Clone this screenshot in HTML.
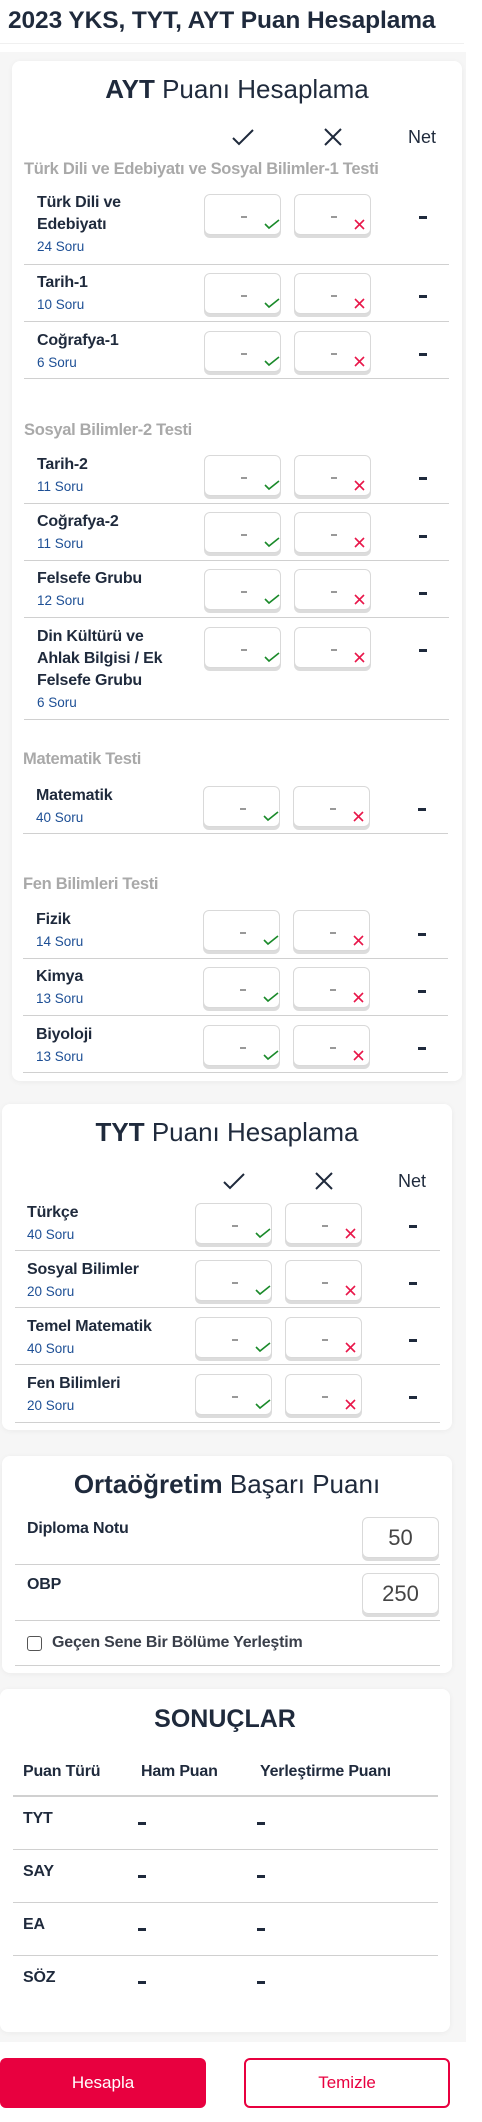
<!DOCTYPE html>
<html><head><meta charset="utf-8"><style>
*{margin:0;padding:0;box-sizing:border-box}
body{width:482px;height:2122px;position:relative;background:#fff;font-family:"Liberation Sans",Arial,sans-serif;color:#1f2a3c;overflow:hidden}
.a{position:absolute}
.bg{position:absolute;left:0;top:52px;width:466px;height:1990px;background:#f6f6f6}
.card{position:absolute;background:#fff;border-radius:8px;box-shadow:0 1px 6px rgba(0,0,0,.05)}
.h1{position:absolute;left:0;width:482px;top:7px;font-size:24.5px;font-weight:bold;text-align:left;padding-left:8px;color:#1f2a3c;letter-spacing:-.1px}
.tt{position:absolute;text-align:center;font-size:26px;color:#1f2a3c;font-weight:300}
.tt b{font-weight:bold}
.sec{position:absolute;font-size:16.5px;font-weight:bold;color:#a9a9a9;line-height:22px;letter-spacing:-.3px}
.n{position:absolute;font-size:16px;font-weight:bold;line-height:22px;color:#1f2a3c;letter-spacing:-.2px}
.n span{display:block;font-size:13.5px;font-weight:normal;color:#1d4f95;letter-spacing:0}
.bx{position:absolute;width:77px;height:41px;border:1px solid #d9d9d9;border-radius:6px;background:#fff;box-shadow:0 3px 0 #dcdcdc}
.bx i{position:absolute;left:36px;top:21px;width:6px;height:2px;background:#999}
.bx svg{position:absolute;left:59px;top:24px}
.nd{position:absolute;width:8px;height:3px;background:#1f2a3c}
.ln{position:absolute;height:1px;background:#d0d0d0}
.lbl{position:absolute;font-size:16px;font-weight:bold;color:#1f2a3c;letter-spacing:-.2px}
.vb{position:absolute;width:77px;height:41px;border:1px solid #d9d9d9;border-radius:6px;box-shadow:0 3px 0 #dcdcdc;font-size:22px;color:#444;text-align:center;line-height:40px}
</style></head><body>
<div class="h1">2023 YKS, TYT, AYT Puan Hesaplama</div>
<div class="a" style="left:0;top:43px;width:464px;height:1px;background:#f0f0f0"></div>
<div class="bg"></div>

<div class="card" style="left:12px;top:61px;width:450px;height:1020px"></div>
<div class="tt" style="left:12px;width:450px;top:74px"><b>AYT</b> Puanı Hesaplama</div>
<svg class="a" style="left:232px;top:128px" width="22" height="18"><path d="M1 10 L7 16 L21 2" fill="none" stroke="#1f2a3c" stroke-width="2"/></svg>
<svg class="a" style="left:324px;top:128px" width="18" height="18"><path d="M1 1 L17 17 M17 1 L1 17" fill="none" stroke="#1f2a3c" stroke-width="2"/></svg>
<div class="a" style="left:408px;top:127px;font-size:18px;color:#1f2a3c">Net</div>
<div class="sec" style="left:24px;top:158px">Türk Dili ve Edebiyatı ve Sosyal Bilimler-1 Testi</div>
<div class="sec" style="left:24px;top:419px">Sosyal Bilimler-2 Testi</div>
<div class="sec" style="left:23px;top:748px">Matematik Testi</div>
<div class="sec" style="left:23px;top:873px">Fen Bilimleri Testi</div>

<div class="n" style="left:37px;top:192px">Türk Dili ve<br>Edebiyatı<span>24 Soru</span></div>
<div class="n" style="left:37px;top:272px">Tarih-1<span>10 Soru</span></div>
<div class="n" style="left:37px;top:330px">Coğrafya-1<span>6 Soru</span></div>
<div class="n" style="left:37px;top:454px">Tarih-2<span>11 Soru</span></div>
<div class="n" style="left:37px;top:511px">Coğrafya-2<span>11 Soru</span></div>
<div class="n" style="left:37px;top:568px">Felsefe Grubu<span>12 Soru</span></div>
<div class="n" style="left:37px;top:626px">Din Kültürü ve<br>Ahlak Bilgisi / Ek<br>Felsefe Grubu<span>6 Soru</span></div>
<div class="n" style="left:36px;top:785px">Matematik<span>40 Soru</span></div>
<div class="n" style="left:36px;top:909px">Fizik<span>14 Soru</span></div>
<div class="n" style="left:36px;top:966px">Kimya<span>13 Soru</span></div>
<div class="n" style="left:36px;top:1024px">Biyoloji<span>13 Soru</span></div>

<div class="bx" style="left:204px;top:194px"><i></i><svg width="16" height="11"><path d="M1 5 L5 9 L15 1" fill="none" stroke="#1a8a2a" stroke-width="1.6"/></svg></div>
<div class="bx" style="left:294px;top:194px"><i></i><svg width="11" height="11"><path d="M1 1 L10 10 M10 1 L1 10" fill="none" stroke="#e8174a" stroke-width="1.6"/></svg></div>
<div class="nd" style="left:419px;top:216px"></div>
<div class="bx" style="left:204px;top:273px"><i></i><svg width="16" height="11"><path d="M1 5 L5 9 L15 1" fill="none" stroke="#1a8a2a" stroke-width="1.6"/></svg></div>
<div class="bx" style="left:294px;top:273px"><i></i><svg width="11" height="11"><path d="M1 1 L10 10 M10 1 L1 10" fill="none" stroke="#e8174a" stroke-width="1.6"/></svg></div>
<div class="nd" style="left:419px;top:295px"></div>
<div class="bx" style="left:204px;top:331px"><i></i><svg width="16" height="11"><path d="M1 5 L5 9 L15 1" fill="none" stroke="#1a8a2a" stroke-width="1.6"/></svg></div>
<div class="bx" style="left:294px;top:331px"><i></i><svg width="11" height="11"><path d="M1 1 L10 10 M10 1 L1 10" fill="none" stroke="#e8174a" stroke-width="1.6"/></svg></div>
<div class="nd" style="left:419px;top:353px"></div>
<div class="bx" style="left:204px;top:455px"><i></i><svg width="16" height="11"><path d="M1 5 L5 9 L15 1" fill="none" stroke="#1a8a2a" stroke-width="1.6"/></svg></div>
<div class="bx" style="left:294px;top:455px"><i></i><svg width="11" height="11"><path d="M1 1 L10 10 M10 1 L1 10" fill="none" stroke="#e8174a" stroke-width="1.6"/></svg></div>
<div class="nd" style="left:419px;top:477px"></div>
<div class="bx" style="left:204px;top:512px"><i></i><svg width="16" height="11"><path d="M1 5 L5 9 L15 1" fill="none" stroke="#1a8a2a" stroke-width="1.6"/></svg></div>
<div class="bx" style="left:294px;top:512px"><i></i><svg width="11" height="11"><path d="M1 1 L10 10 M10 1 L1 10" fill="none" stroke="#e8174a" stroke-width="1.6"/></svg></div>
<div class="nd" style="left:419px;top:535px"></div>
<div class="bx" style="left:204px;top:569px"><i></i><svg width="16" height="11"><path d="M1 5 L5 9 L15 1" fill="none" stroke="#1a8a2a" stroke-width="1.6"/></svg></div>
<div class="bx" style="left:294px;top:569px"><i></i><svg width="11" height="11"><path d="M1 1 L10 10 M10 1 L1 10" fill="none" stroke="#e8174a" stroke-width="1.6"/></svg></div>
<div class="nd" style="left:419px;top:592px"></div>
<div class="bx" style="left:204px;top:627px"><i></i><svg width="16" height="11"><path d="M1 5 L5 9 L15 1" fill="none" stroke="#1a8a2a" stroke-width="1.6"/></svg></div>
<div class="bx" style="left:294px;top:627px"><i></i><svg width="11" height="11"><path d="M1 1 L10 10 M10 1 L1 10" fill="none" stroke="#e8174a" stroke-width="1.6"/></svg></div>
<div class="nd" style="left:419px;top:649px"></div>
<div class="bx" style="left:203px;top:786px"><i></i><svg width="16" height="11"><path d="M1 5 L5 9 L15 1" fill="none" stroke="#1a8a2a" stroke-width="1.6"/></svg></div>
<div class="bx" style="left:293px;top:786px"><i></i><svg width="11" height="11"><path d="M1 1 L10 10 M10 1 L1 10" fill="none" stroke="#e8174a" stroke-width="1.6"/></svg></div>
<div class="nd" style="left:418px;top:808px"></div>
<div class="bx" style="left:203px;top:910px"><i></i><svg width="16" height="11"><path d="M1 5 L5 9 L15 1" fill="none" stroke="#1a8a2a" stroke-width="1.6"/></svg></div>
<div class="bx" style="left:293px;top:910px"><i></i><svg width="11" height="11"><path d="M1 1 L10 10 M10 1 L1 10" fill="none" stroke="#e8174a" stroke-width="1.6"/></svg></div>
<div class="nd" style="left:418px;top:933px"></div>
<div class="bx" style="left:203px;top:967px"><i></i><svg width="16" height="11"><path d="M1 5 L5 9 L15 1" fill="none" stroke="#1a8a2a" stroke-width="1.6"/></svg></div>
<div class="bx" style="left:293px;top:967px"><i></i><svg width="11" height="11"><path d="M1 1 L10 10 M10 1 L1 10" fill="none" stroke="#e8174a" stroke-width="1.6"/></svg></div>
<div class="nd" style="left:418px;top:990px"></div>
<div class="bx" style="left:203px;top:1025px"><i></i><svg width="16" height="11"><path d="M1 5 L5 9 L15 1" fill="none" stroke="#1a8a2a" stroke-width="1.6"/></svg></div>
<div class="bx" style="left:293px;top:1025px"><i></i><svg width="11" height="11"><path d="M1 1 L10 10 M10 1 L1 10" fill="none" stroke="#e8174a" stroke-width="1.6"/></svg></div>
<div class="nd" style="left:418px;top:1047px"></div>

<div class="ln" style="left:24px;width:425px;top:264px"></div>
<div class="ln" style="left:24px;width:425px;top:321px"></div>
<div class="ln" style="left:24px;width:425px;top:378px"></div>
<div class="ln" style="left:24px;width:425px;top:503px"></div>
<div class="ln" style="left:24px;width:425px;top:560px"></div>
<div class="ln" style="left:24px;width:425px;top:617px"></div>
<div class="ln" style="left:24px;width:425px;top:719px"></div>
<div class="ln" style="left:23px;width:425px;top:833px"></div>
<div class="ln" style="left:23px;width:425px;top:958px"></div>
<div class="ln" style="left:23px;width:425px;top:1015px"></div>
<div class="ln" style="left:23px;width:425px;top:1072px"></div>

<div class="card" style="left:2px;top:1104px;width:450px;height:326px"></div>
<div class="tt" style="left:2px;width:450px;top:1117px"><b>TYT</b> Puanı Hesaplama</div>
<svg class="a" style="left:223px;top:1172px" width="22" height="18"><path d="M1 10 L7 16 L21 2" fill="none" stroke="#1f2a3c" stroke-width="2"/></svg>
<svg class="a" style="left:315px;top:1172px" width="18" height="18"><path d="M1 1 L17 17 M17 1 L1 17" fill="none" stroke="#1f2a3c" stroke-width="2"/></svg>
<div class="a" style="left:398px;top:1171px;font-size:18px;color:#1f2a3c">Net</div>
<div class="n" style="left:27px;top:1202px">Türkçe<span>40 Soru</span></div>
<div class="n" style="left:27px;top:1259px">Sosyal Bilimler<span>20 Soru</span></div>
<div class="n" style="left:27px;top:1316px">Temel Matematik<span>40 Soru</span></div>
<div class="n" style="left:27px;top:1373px">Fen Bilimleri<span>20 Soru</span></div>
<div class="bx" style="left:195px;top:1203px"><i></i><svg width="16" height="11"><path d="M1 5 L5 9 L15 1" fill="none" stroke="#1a8a2a" stroke-width="1.6"/></svg></div>
<div class="bx" style="left:285px;top:1203px"><i></i><svg width="11" height="11"><path d="M1 1 L10 10 M10 1 L1 10" fill="none" stroke="#e8174a" stroke-width="1.6"/></svg></div>
<div class="nd" style="left:409px;top:1225px"></div>
<div class="bx" style="left:195px;top:1260px"><i></i><svg width="16" height="11"><path d="M1 5 L5 9 L15 1" fill="none" stroke="#1a8a2a" stroke-width="1.6"/></svg></div>
<div class="bx" style="left:285px;top:1260px"><i></i><svg width="11" height="11"><path d="M1 1 L10 10 M10 1 L1 10" fill="none" stroke="#e8174a" stroke-width="1.6"/></svg></div>
<div class="nd" style="left:409px;top:1282px"></div>
<div class="bx" style="left:195px;top:1317px"><i></i><svg width="16" height="11"><path d="M1 5 L5 9 L15 1" fill="none" stroke="#1a8a2a" stroke-width="1.6"/></svg></div>
<div class="bx" style="left:285px;top:1317px"><i></i><svg width="11" height="11"><path d="M1 1 L10 10 M10 1 L1 10" fill="none" stroke="#e8174a" stroke-width="1.6"/></svg></div>
<div class="nd" style="left:409px;top:1339px"></div>
<div class="bx" style="left:195px;top:1374px"><i></i><svg width="16" height="11"><path d="M1 5 L5 9 L15 1" fill="none" stroke="#1a8a2a" stroke-width="1.6"/></svg></div>
<div class="bx" style="left:285px;top:1374px"><i></i><svg width="11" height="11"><path d="M1 1 L10 10 M10 1 L1 10" fill="none" stroke="#e8174a" stroke-width="1.6"/></svg></div>
<div class="nd" style="left:409px;top:1396px"></div>
<div class="ln" style="left:15px;width:425px;top:1250px"></div>
<div class="ln" style="left:15px;width:425px;top:1307px"></div>
<div class="ln" style="left:15px;width:425px;top:1364px"></div>
<div class="ln" style="left:15px;width:425px;top:1422px"></div>

<div class="card" style="left:2px;top:1456px;width:450px;height:217px"></div>
<div class="tt" style="left:2px;width:450px;top:1469px"><b>Ortaöğretim</b> Başarı Puanı</div>
<div class="lbl" style="left:27px;top:1520px">Diploma Notu</div>
<div class="vb" style="left:362px;top:1517px">50</div>
<div class="ln" style="left:15px;width:425px;top:1564px"></div>
<div class="lbl" style="left:27px;top:1576px">OBP</div>
<div class="vb" style="left:362px;top:1573px">250</div>
<div class="ln" style="left:15px;width:425px;top:1620px"></div>
<div class="a" style="left:27px;top:1636px;width:15px;height:15px;border:1.5px solid #555;border-radius:3px"></div>
<div class="lbl" style="left:52px;top:1634px;color:#3a3f4a">Geçen Sene Bir Bölüme Yerleştim</div>
<div class="ln" style="left:15px;width:425px;top:1665px"></div>

<div class="card" style="left:0;top:1689px;width:450px;height:343px"></div>
<div class="a" style="left:0;width:450px;top:1705px;text-align:center;font-size:25px;font-weight:bold;color:#1f2a3c">SONUÇLAR</div>
<div class="lbl" style="left:23px;top:1763px">Puan Türü</div>
<div class="lbl" style="left:141px;top:1763px">Ham Puan</div>
<div class="lbl" style="left:260px;top:1763px">Yerleştirme Puanı</div>
<div class="a" style="left:13px;width:425px;top:1795px;height:2px;background:#d0d0d0"></div>
<div class="lbl" style="left:23px;top:1810px">TYT</div>
<div class="nd" style="left:138px;top:1822px"></div><div class="nd" style="left:257px;top:1822px"></div>
<div class="ln" style="left:13px;width:425px;top:1849px"></div>
<div class="lbl" style="left:23px;top:1863px">SAY</div>
<div class="nd" style="left:138px;top:1875px"></div><div class="nd" style="left:257px;top:1875px"></div>
<div class="ln" style="left:13px;width:425px;top:1902px"></div>
<div class="lbl" style="left:23px;top:1916px">EA</div>
<div class="nd" style="left:138px;top:1928px"></div><div class="nd" style="left:257px;top:1928px"></div>
<div class="ln" style="left:13px;width:425px;top:1955px"></div>
<div class="lbl" style="left:23px;top:1969px">SÖZ</div>
<div class="nd" style="left:138px;top:1981px"></div><div class="nd" style="left:257px;top:1981px"></div>

<div class="a" style="left:0;top:2058px;width:206px;height:50px;background:#e8003f;border-radius:6px;color:#fff;font-size:17px;text-align:center;line-height:50px">Hesapla</div>
<div class="a" style="left:244px;top:2058px;width:206px;height:50px;border:2px solid #e8003f;border-radius:6px;color:#e8003f;font-size:17px;text-align:center;line-height:46px;background:#fff">Temizle</div>
</body></html>
